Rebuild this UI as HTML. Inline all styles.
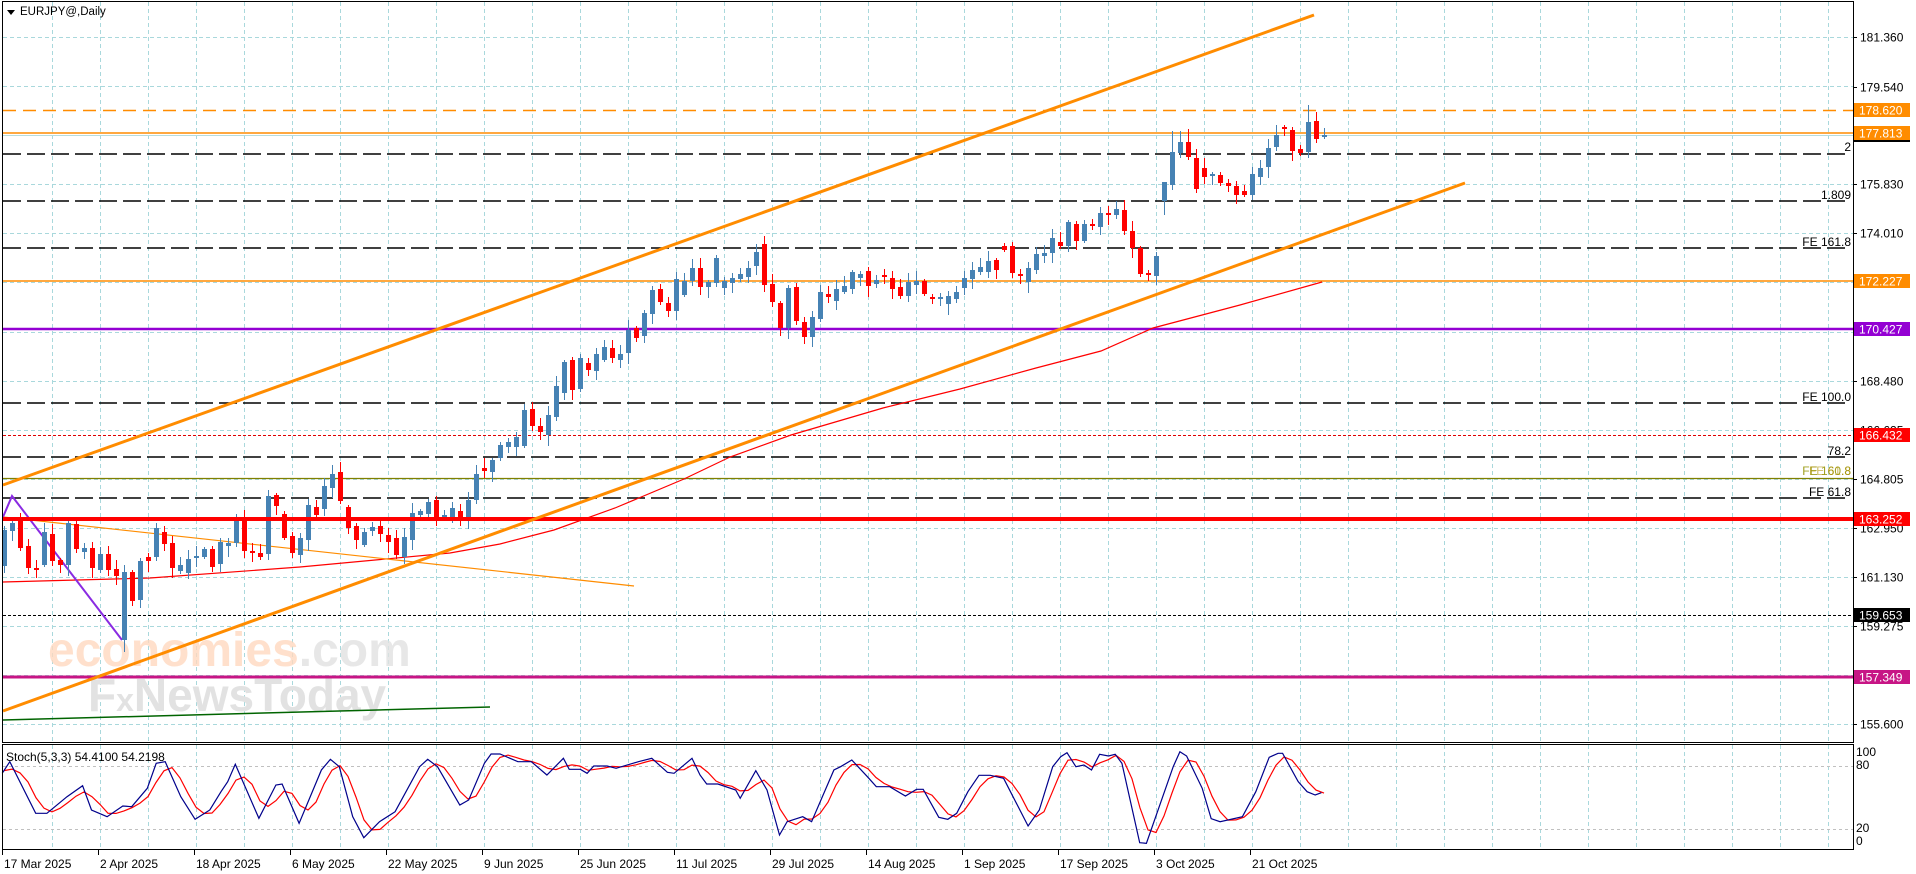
<!DOCTYPE html>
<html><head><meta charset="utf-8">
<style>
html,body{margin:0;padding:0;background:#fff;width:1916px;height:874px;overflow:hidden}
svg{display:block}
text{font-family:"Liberation Sans",Tahoma,sans-serif;font-size:12px}
</style></head>
<body>
<svg id="s" width="1916" height="874" xmlns="http://www.w3.org/2000/svg">
<rect x="0" y="0" width="1916" height="874" fill="#fff"/>
<g id="grid" stroke="#a9d8dc" stroke-width="1" stroke-dasharray="4,3"></g>
<!-- watermark -->
<text x="48" y="666" style="font-size:48px;font-weight:bold" fill="#ffd9c0" opacity="0.8">economies<tspan fill="#e2e2e2">.com</tspan></text>
<text x="88" y="711" style="font-size:46px;font-weight:bold" fill="#e2e2e2">F<tspan font-size="32px">x</tspan>NewsToday</text>
<!-- horizontal level lines -->
<line x1="3" y1="110.5" x2="1853" y2="110.5" stroke="#FF8C00" stroke-width="1.5" stroke-dasharray="13,7"/>
<line x1="3" y1="133" x2="1853" y2="133" stroke="#FF8C00" stroke-width="1.5"/>
<line x1="3" y1="135.5" x2="1853" y2="135.5" stroke="#b8dcdc" stroke-width="1"/>
<g stroke="#000" stroke-width="1.5" stroke-dasharray="18,6">
<line x1="3" y1="154" x2="1846" y2="154"/>
<line x1="3" y1="201" x2="1846" y2="201"/>
<line x1="3" y1="248" x2="1846" y2="248"/>
<line x1="3" y1="403" x2="1846" y2="403"/>
<line x1="3" y1="457" x2="1846" y2="457"/>
<line x1="3" y1="498" x2="1846" y2="498"/>
</g>
<line x1="3" y1="281" x2="1853" y2="281" stroke="#FF8C00" stroke-width="1.5"/>
<line x1="3" y1="329" x2="1853" y2="329" stroke="#9400D3" stroke-width="2.5"/>
<line x1="3" y1="435.5" x2="1853" y2="435.5" stroke="#e00000" stroke-width="1" stroke-dasharray="3,2"/>
<line x1="3" y1="478.5" x2="1853" y2="478.5" stroke="#808000" stroke-width="1.2"/>
<line x1="3" y1="615.5" x2="1853" y2="615.5" stroke="#000" stroke-width="1" stroke-dasharray="3,2"/>
<line x1="3" y1="677" x2="1853" y2="677" stroke="#C71585" stroke-width="3"/>
<!-- level labels -->
<g text-anchor="end" fill="#000">
<text x="1851" y="151">2</text>
<text x="1851" y="199">1.809</text>
<text x="1851" y="246">FE 161.8</text>
<text x="1851" y="401">FE 100.0</text>
<text x="1851" y="455">78.2</text>
<text x="1851" y="475" fill="#a0a020">FE 160.8</text>
<text x="1851" y="475" fill="#b09000" opacity="0.6">FE 61.8</text>
<text x="1851" y="496">FE 61.8</text>
</g>
<!-- trend lines -->
<polyline id="ma" fill="none" stroke="#ff0000" stroke-width="1.2" points="3,582 150,578 300,567 450,553 500,544 554,530 615,508 684,479 730,457 791,435 883,408 960,389 1036,368 1101,351 1153,328 1240,305 1322,282"/>
<line x1="3" y1="517" x2="634" y2="586" stroke="#FF8C00" stroke-width="1.2"/>
<polyline fill="none" stroke="#8A2BE2" stroke-width="2" points="3,517 12,496 122,640"/>
<line x1="3" y1="720" x2="490" y2="707" stroke="#006400" stroke-width="1.5"/>
<g id="candles"></g>
<line x1="3" y1="519" x2="1853" y2="519" stroke="#ff0000" stroke-width="4"/>
<line x1="3" y1="485" x2="1314" y2="15" stroke="#FF8C00" stroke-width="3"/>
<line x1="3" y1="711" x2="1465" y2="183" stroke="#FF8C00" stroke-width="3"/>
<!-- stoch panel -->
<line x1="3" y1="766.5" x2="1853" y2="766.5" stroke="#c0c0c0" stroke-dasharray="3,3"/>
<line x1="3" y1="829.5" x2="1853" y2="829.5" stroke="#c0c0c0" stroke-dasharray="3,3"/>
<g id="stoch"></g>
<text x="6" y="761" fill="#000">Stoch(5,3,3) 54.4100 54.2198</text>
<!-- frames -->
<rect x="2.5" y="1.5" width="1851" height="741" fill="none" stroke="#000" stroke-width="1"/>
<rect x="2.5" y="744.5" width="1851" height="105" fill="none" stroke="#000" stroke-width="1"/>
<!-- title -->
<path d="M7 10 L15 10 L11 15 Z" fill="#000"/>
<text x="20" y="15" fill="#000" style="font-size:11.5px">EURJPY@,Daily</text>
<!-- price axis -->
<g id="axis" fill="#000"></g>
<g id="dates" fill="#000"></g>
</svg>
<script>
(function(){
var NS="http://www.w3.org/2000/svg";
function el(p,t,a,txt){var e=document.createElementNS(NS,t);for(var k in a)e.setAttribute(k,a[k]);if(txt!==undefined)e.textContent=txt;p.appendChild(e);return e;}
var g=document.getElementById('grid');
for(var x=52;x<1853;x+=48){el(g,'line',{x1:x+.5,y1:2,x2:x+.5,y2:742});el(g,'line',{x1:x+.5,y1:745,x2:x+.5,y2:849});}
var gy=[37,86,135,184,233,282,332,381,430,479,528,577,626,675,724];
gy.forEach(function(y){el(g,'line',{x1:3,y1:y+.5,x2:1853,y2:y+.5});});
var D="b530566,b523531,r519548,r546568,r568569,b532565,r534561,r560565,b523565,r524549,b548552,r548568,b554570,r554570,r569576,b572640,r572601,b561600,r557561,b528557,r532544,r543568,b565571,b559573,b556558,b549557,r549567,b542564,b543546,b520543,r517551,r551552,r553557,b496554,r495506,r514538,r536553,b538555,b505540,r507515,b486509,b474488,r472501,r507528,r526540,b532545,b527531,r526534,r535542,r538555,b537557,b513540,b511515,b502514,r500517,b515518,b508518,r511518,b500518,b474500,r468471,b460472,b445458,b442447,b437447,b410446,r409426,r426432,b415435,b386417,b362393,r360390,b358389,r363370,b354371,b347360,r348358,b354360,b330353,r328338,b313336,b290314,r289302,r303311,b279311,b281295,b268281,r268287,b282287,b258283,b281288,b278283,b274279,b268277,b252266,r244285,r284302,r303328,b288328,r287321,r322337,b317337,b292319,r294297,b289301,b286292,b272289,b274278,r271286,b280284,r275277,r278289,r287296,b282296,b281285,r281294,r297299,b297298,b296304,b292299,b278288,b270279,b267272,b261272,r260270,r246250,r246273,r274276,b268282,b254270,b253256,b238253,r242246,b222246,r224241,b224241,r224225,b213227,r213214,b209215,r210231,r231248,r248274,r273275,b256276,b182201,b152185,b142153,r142157,r158189,r168177,b174175,r175183,r183186,r186195,r191195,b174195,b168177,b148167,b135147,r127129,r130151,r149153,b122152,r121139,b135137".split(',');
var cg=document.getElementById('candles');
var special={15:[565,652],95:[236,292],145:[190,215],146:[131,190],163:[105,158],164:[112,143],140:[200,235],33:[490,560],147:[131,158],148:[129,160]};
D.forEach(function(s,i){
 var c=s[0]=='b'?'#4682B4':'#ff0000';var t=+s.substr(1,3),b=+s.substr(4,3);
 var x=4+8*i;
 var w1=2+((i*37+11)%9),w2=2+((i*53+5)%10);
 var hi=t-w1,lo=b+w2;
 if(special[i]){hi=special[i][0];lo=special[i][1];}
 el(cg,'line',{x1:x+.5,y1:hi,x2:x+.5,y2:lo,stroke:c,'stroke-width':1});
 var h=Math.max(b-t,2);
 el(cg,'rect',{x:x-2,y:t,width:5,height:h,fill:c});
});
var z4=[[5,160],[22,125],[80,280],[105,280],[150,230],[185,197],[205,270],[240,290],[275,258],[295,260],[330,205],[350,130],[370,125],[405,230],[437,298],[470,270],[495,215],[510,185],[527,133],[580,295],[618,195],[632,192],[670,310],[720,150],[740,118],[760,140],[790,290],[815,353],[850,305],[885,275],[940,140],[958,118],[980,140],[1030,255],[1050,240],[1085,130],[1100,102],[1120,102],[1160,125],[1190,125],[1225,165],[1262,115],[1275,148],[1300,148],[1315,160],[1330,138],[1360,138],[1380,145],[1430,125],[1460,115],[1495,157],[1510,160],[1550,115]];
var z5=[[0,165],[15,192],[40,192],[80,210],[90,235],[125,152],[150,210],[178,345],[195,305],[230,290],[250,305],[300,150],[315,140],[340,120],[375,170],[395,200],[425,200],[460,228],[485,208],[500,208],[535,292],[555,298],[575,280],[600,215],[625,166],[650,166],[680,175],[735,318],[760,270],[790,140],[808,110],[822,98],[842,140],[860,135],[877,150],[895,103],[915,108],[930,103],[945,130],[985,368],[1000,370],[1060,140],[1075,95],[1090,108],[1125,205],[1145,296],[1165,305],[1215,290],[1245,215],[1275,112],[1295,100],[1305,100],[1340,185],[1360,215],[1378,225],[1392,218]];
var pts=[];
z4.forEach(function(p){pts.push([p[0]/2.24,720+p[1]/3]);});
z5.forEach(function(p){pts.push([700+p[0]/2.24,720+p[1]/3]);});
var blueP=pts.map(function(p){return p[0].toFixed(1)+','+p[1].toFixed(1);}).join(' ');
function itp(x){for(var k=1;k<pts.length;k++){if(pts[k][0]>=x){var a=pts[k-1],b=pts[k];var t=(x-a[0])/((b[0]-a[0])||1);return a[1]+t*(b[1]-a[1]);}}return pts[pts.length-1][1];}
var bv=[];for(var i=0;i<166;i++)bv.push(itp(4+8*i));
var rp=[];for(var i=0;i<166;i++){var a=bv[Math.max(0,i-2)],b=bv[Math.max(0,i-1)],c=bv[i];rp.push((4+8*i)+','+((a+b+c)/3).toFixed(1));}
var sg=document.getElementById('stoch');
el(sg,'polyline',{points:rp.join(' '),fill:'none',stroke:'#ff0000','stroke-width':1.2});
el(sg,'polyline',{points:blueP,fill:'none',stroke:'#00008B','stroke-width':1.2});
var ax=document.getElementById('axis');
[[181.360,37],[179.540,87],[175.830,184],[174.010,233],[168.480,381],[166.625,430],[164.805,479],[162.950,528],[161.130,577],[159.275,626],[155.600,724]].forEach(function(a){
 el(ax,'line',{x1:1853,y1:a[1]+.5,x2:1857,y2:a[1]+.5,stroke:'#000'});
 el(ax,'text',{x:1860,y:a[1]+4.5},a[0].toFixed(3));
});
[['178.620',110,'#FF8C00','#fff'],['177.813',133,'#FF8C00','#fff'],['172.227',281,'#FF8C00','#fff'],['170.427',329,'#9400D3','#fff'],['166.432',435,'#ff0000','#fff'],['163.252',519,'#ff0000','#fff'],['159.653',615,'#000','#fff'],['157.349',677,'#C71585','#fff']].forEach(function(a){
 el(ax,'rect',{x:1854,y:a[1]-7,width:56,height:14,fill:a[2]});
 el(ax,'text',{x:1859,y:a[1]+4.5,fill:a[3]},a[0]);
});
el(ax,'rect',{x:1854,y:140,width:56,height:2,fill:'#000'});
[['100',756],['80',769],['20',832],['0',845]].forEach(function(a){el(ax,'text',{x:1856,y:a[1]},a[0]);});
var dg=document.getElementById('dates');
[['17 Mar 2025',4],['2 Apr 2025',100],['18 Apr 2025',196],['6 May 2025',292],['22 May 2025',388],['9 Jun 2025',484],['25 Jun 2025',580],['11 Jul 2025',676],['29 Jul 2025',772],['14 Aug 2025',868],['1 Sep 2025',964],['17 Sep 2025',1060],['3 Oct 2025',1156],['21 Oct 2025',1252]].forEach(function(a){
 el(dg,'line',{x1:a[1]-1.5,y1:850,x2:a[1]-1.5,y2:855,stroke:'#000'});
 el(dg,'text',{x:a[1],y:868},a[0]);
});
})();
</script>
</body></html>
